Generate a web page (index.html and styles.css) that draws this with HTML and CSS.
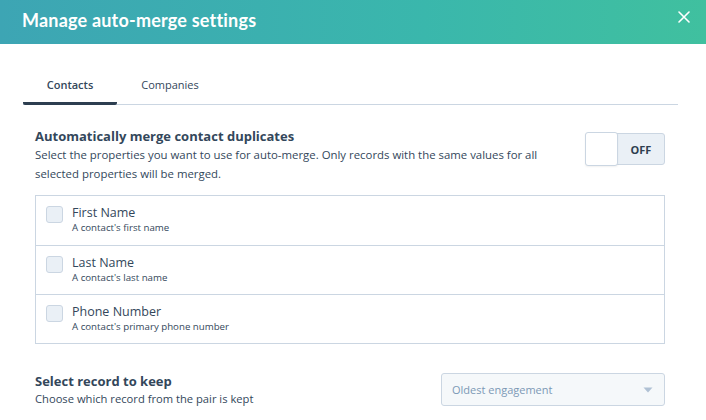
FILE: index.html
```html
<!DOCTYPE html>
<html>
<head>
<meta charset="utf-8">
<link rel="stylesheet" href="styles.css">
</head>
<body>
<div class="modal">
  <header class="header">
    <h1 class="title">Manage auto-merge settings</h1>
    <button class="close" aria-label="Close">
      <svg width="12" height="12" viewBox="0 0 12 12"><path d="M1 1L11 11M11 1L1 11" stroke="#ffffff" stroke-width="1.6" stroke-linecap="round"/></svg>
    </button>
  </header>
  <div class="body">
    <nav class="tabs">
      <div class="tab active">Contacts</div>
      <div class="tab">Companies</div>
    </nav>
    <section class="section">
      <div class="section-head">
        <div class="section-text">
          <h2 class="section-title">Automatically merge contact duplicates</h2>
          <p class="section-desc">Select the properties you want to use for auto-merge. Only records with the same values for all selected properties will be merged.</p>
        </div>
        <div class="toggle">
          <span class="knob"></span>
          <span class="toggle-label">OFF</span>
        </div>
      </div>
      <div class="props">
        <div class="prop">
          <span class="checkbox"></span>
          <div class="prop-text">
            <div class="prop-name">First Name</div>
            <div class="prop-sub">A contact's first name</div>
          </div>
        </div>
        <div class="prop">
          <span class="checkbox"></span>
          <div class="prop-text">
            <div class="prop-name">Last Name</div>
            <div class="prop-sub">A contact's last name</div>
          </div>
        </div>
        <div class="prop">
          <span class="checkbox"></span>
          <div class="prop-text">
            <div class="prop-name">Phone Number</div>
            <div class="prop-sub">A contact's primary phone number</div>
          </div>
        </div>
      </div>
    </section>
    <section class="section keep">
      <div class="section-text">
        <h2 class="section-title">Select record to keep</h2>
        <p class="keep-desc">Choose which record from the pair is kept</p>
      </div>
      <div class="select">
        <span class="select-value">Oldest engagement</span>
        <svg class="caret" width="10" height="6" viewBox="0 0 10 6"><path d="M0.5 0.5H9.5L5 5.5Z" fill="#b0c1d4"/></svg>
      </div>
    </section>
  </div>
</div>
</body>
</html>
```

FILE: styles.css
```css
* { box-sizing: border-box; }
html, body { margin: 0; padding: 0; background: #ffffff; }
body {
  font-family: "Open Sans", "Noto Sans", sans-serif;
  color: #33475b;
  width: 706px;
  height: 420px;
  overflow: hidden;
}
.header {
  height: 44px;
  background: linear-gradient(90deg, #3da5b4 0%, #3ab7ac 60%, #40c09f 100%);
  display: flex;
  align-items: center;
  justify-content: space-between;
  padding: 0 14px 0 22px;
}
.title {
  margin: 0 0 4px 0;
  font-family: Lato, sans-serif;
  font-size: 18px;
  font-weight: 700;
  color: #ffffff;
  letter-spacing: 0.2px;
}
.close {
  background: none;
  border: 0;
  padding: 0;
  width: 16px;
  height: 16px;
  display: flex;
  align-items: center;
  justify-content: center;
  margin-bottom: 10px;
}
.body {
  padding: 24px 28px 0 23px;
}
.tabs {
  display: flex;
  border-bottom: 1px solid #cbd6e2;
  height: 37px;
}
.tab {
  font-size: 11px;
  color: #33475b;
  padding: 9px 0 0;
  text-align: center;
}
.tab:first-child { width: 94px; }
.tab:nth-child(2) { width: 106px; }
.tab.active {
  font-weight: 600;
  border-bottom: 3px solid #2d3e50;
  border-radius: 2px;
  margin-bottom: -1px;
}
.section {
  padding: 0 13px 0 12px;
}
.section-head {
  display: flex;
  justify-content: space-between;
  align-items: flex-start;
  margin-top: 23px;
}
.section-text { width: 515px; }
.section-title {
  margin: 0;
  font-size: 13px;
  font-weight: 700;
  line-height: 17px;
  color: #33475b;
}
.section-desc {
  margin: 0;
  font-size: 11.4px;
  line-height: 19px;
  color: #33475b;
}
.toggle {
  display: flex;
  margin-top: 5px;
  width: 80px;
  height: 32px;
  border-radius: 3px;
  background: #eaf0f6;
  border: 1px solid #cbd6e2;
  position: relative;
}
.knob {
  width: 33px;
  height: 34px;
  margin: -2px 0 0 -1px;
  background: #ffffff;
  border: 1px solid #cbd6e2;
  border-radius: 3px;
  box-shadow: 0 1px 2px rgba(0,0,0,0.06);
}
.toggle-label {
  flex: 1;
  display: flex;
  align-items: center;
  justify-content: center;
  font-size: 11px;
  font-weight: 700;
  color: #2d3e50;
}
.props {
  margin-top: 12px;
  border: 1px solid #cbd6e2;
}
.prop {
  display: flex;
  align-items: flex-start;
  height: 49px;
  padding: 8px 10px 0;
}
.prop + .prop { border-top: 1px solid #cbd6e2; }
.checkbox {
  width: 17px;
  height: 17px;
  margin-top: 2px;
  background: #eaf0f6;
  border: 1px solid #cbd6e2;
  border-radius: 3px;
}
.prop-text { margin-left: 9px; }
.prop-name {
  font-size: 12.5px;
  line-height: 17px;
  color: #33475b;
}
.prop-sub {
  font-size: 9.7px;
  line-height: 13px;
  color: #33475b;
}
.keep {
  display: flex;
  justify-content: space-between;
  align-items: flex-start;
  margin-top: 29px;
}
.keep .section-text { width: auto; padding-top: 0; }
.keep .section-title { line-height: 17px; }
.keep-desc {
  margin: 0;
  font-size: 11.2px;
  line-height: 17px;
}
.select {
  width: 224px;
  height: 33px;
  border: 1px solid #cbd6e2;
  border-radius: 3px;
  background: #f5f8fa;
  display: flex;
  align-items: center;
  justify-content: space-between;
  padding: 0 11px 0 10px;
}
.select-value {
  font-size: 11px;
  color: #7c98b6;
}
```
